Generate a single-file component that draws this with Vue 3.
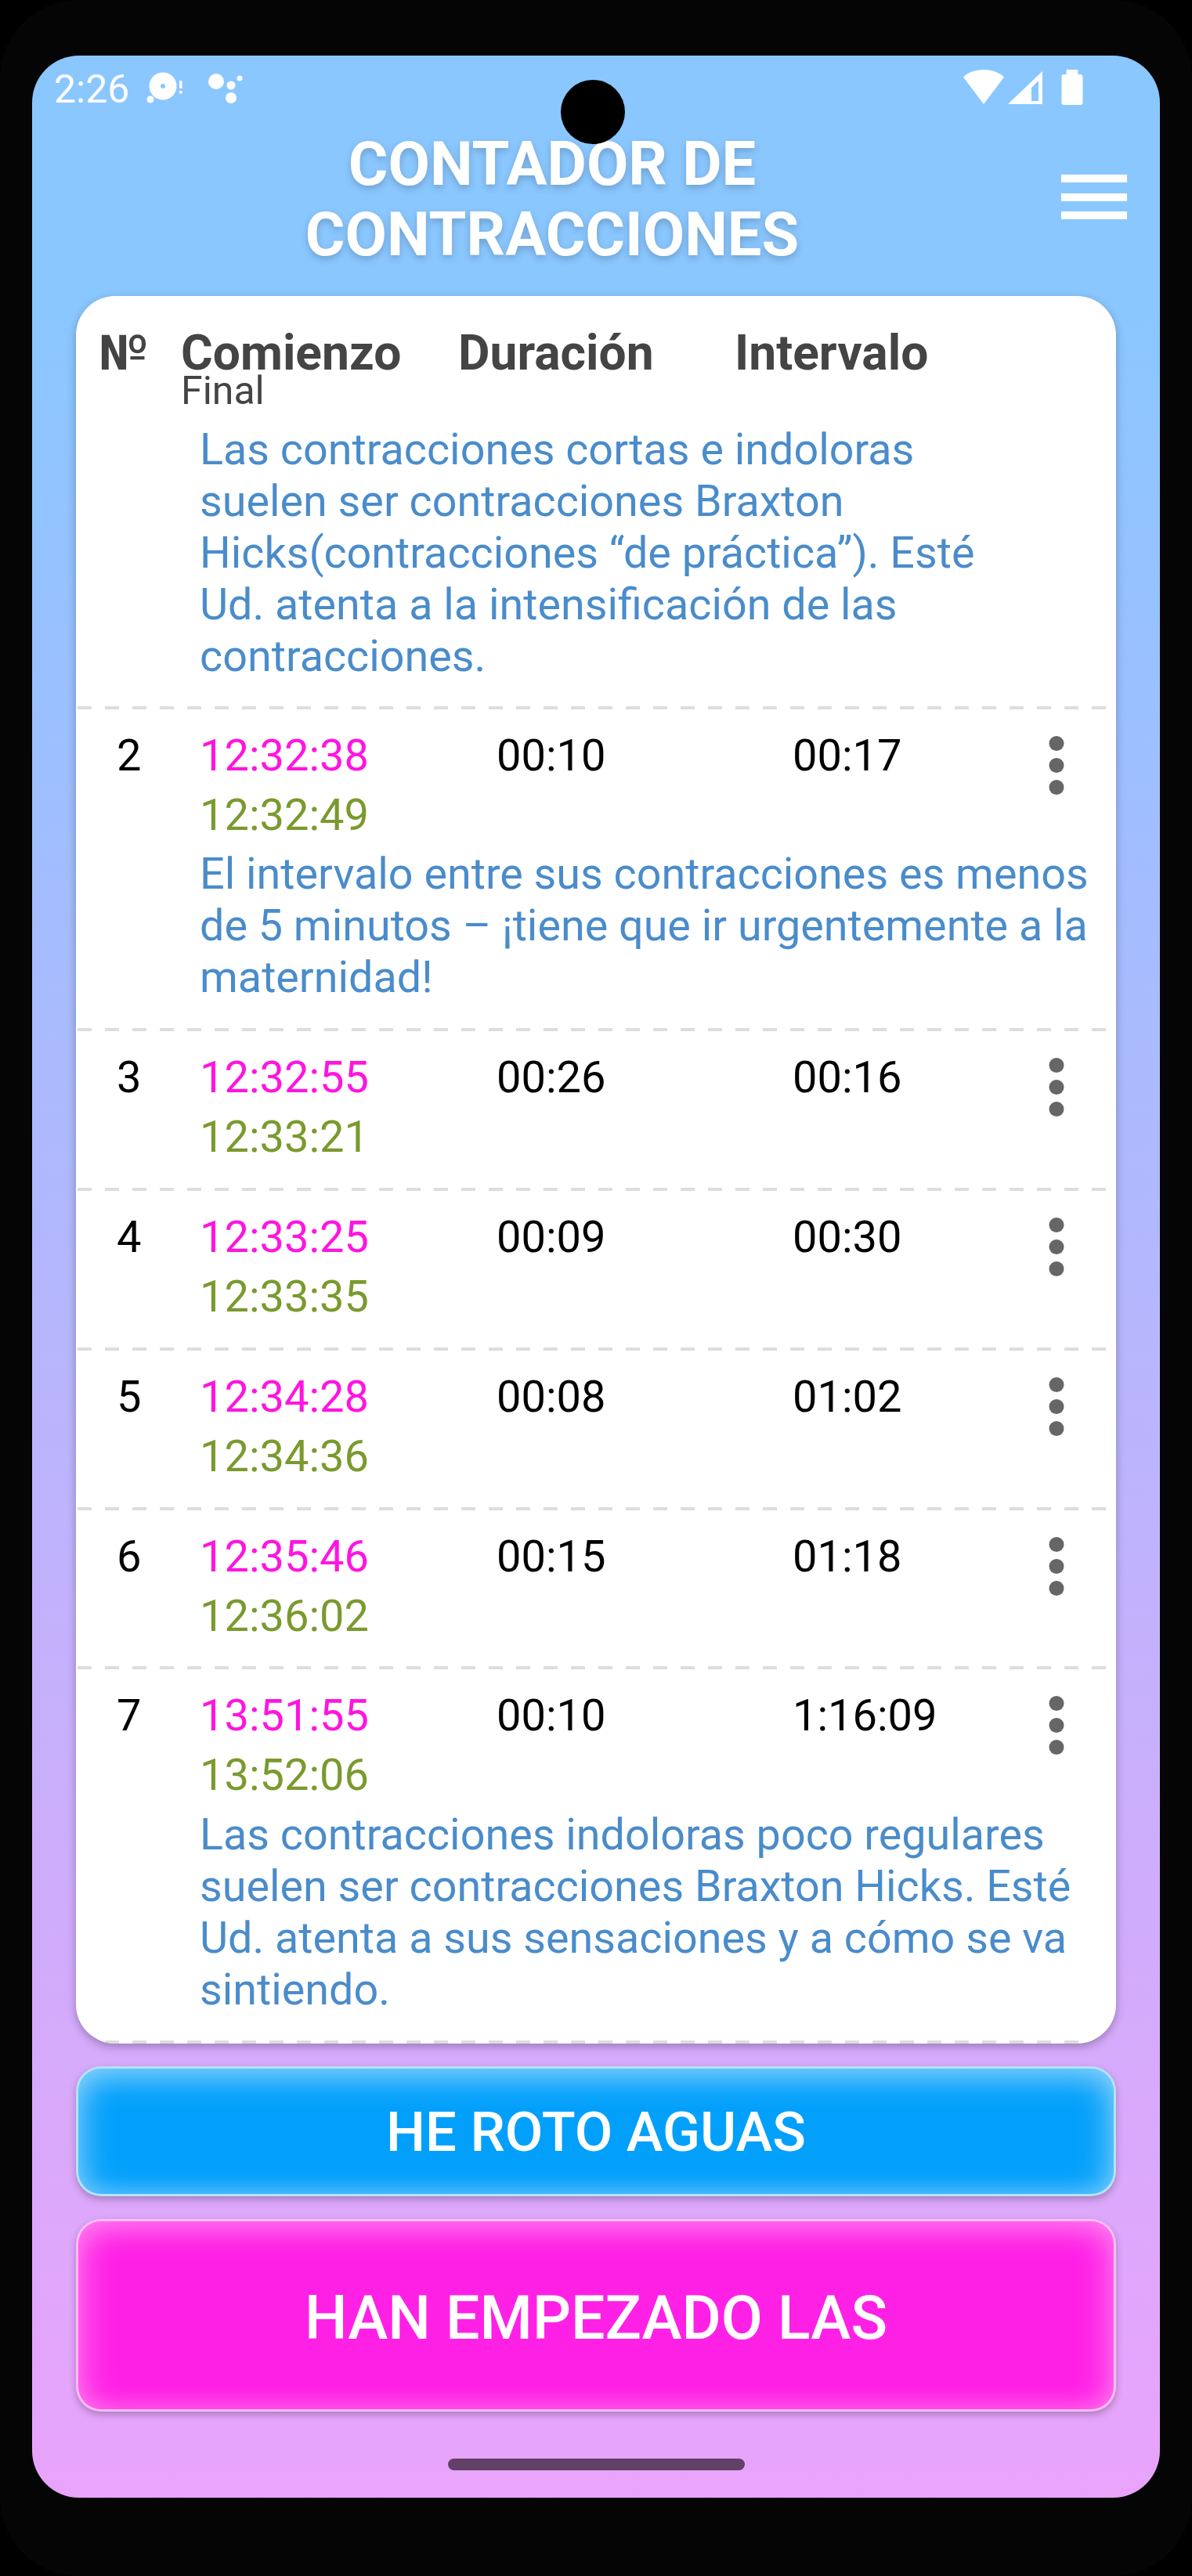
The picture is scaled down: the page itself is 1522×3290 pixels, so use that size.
<template>
  <div class="device">
    <div class="screen">
      <div class="camera"></div>

      <div class="status-bar">
        <span class="clock">2:26</span>
        <svg class="notif-disc" width="56" height="48" viewBox="0 0 56 48">
          <path fill="#fff" fill-rule="evenodd" d="M23 4.500a17.500 17.500 0 1 0 0 35a17.500 17.500 0 1 0 0-35zM23 19a3 3 0 1 1 0 6a3 3 0 1 1 0-6z" />
          <circle cx="7" cy="39" r="4.500" fill="#fff" />
          <rect x="44" y="15" width="3.500" height="10" rx="1" fill="#fff" />
          <rect x="44" y="28" width="3.500" height="3.500" fill="#fff" />
        </svg>
        <svg class="notif-dots" width="48" height="48" viewBox="0 0 48 48">
          <circle cx="12" cy="16" r="10" fill="#fff" />
          <circle cx="31" cy="21" r="5.500" fill="#fff" />
          <circle cx="42" cy="12" r="3.500" fill="#fff" />
          <circle cx="31" cy="37" r="7" fill="#fff" />
        </svg>
        <svg class="sys-icons" width="156" height="48" viewBox="0 0 156 48">
          <path fill="#fff" d="M2 10.500C8 4.500 17 1 28 1s20 3.500 26 9.500L28 45z" />
          <path fill="#fff" fill-rule="evenodd" d="M59 45L103 3V45zM89 41h9V15l-9 9z" />
          <path fill="#fff" d="M136 1h11a1.500 1.500 0 0 1 1.500 1.500V7h3a3 3 0 0 1 3 3v33a3 3 0 0 1-3 3h-21a3 3 0 0 1-3-3V10a3 3 0 0 1 3-3h3V2.500A1.500 1.500 0 0 1 136 1z" />
        </svg>
      </div>

      <header class="app-header">
        <h1 class="title">CONTADOR DE<br />CONTRACCIONES</h1>
        <div class="menu">
          <span></span>
          <span></span>
          <span></span>
        </div>
      </header>

      <section class="card">
        <div class="table-head">
          <span class="head-no">№</span>
          <div class="head-start">
            <span>Comienzo</span>
            <small>Final</small>
          </div>
          <span>Duración</span>
          <span>Intervalo</span>
        </div>
        <p class="hint first-hint">{{ firstHint }}</p>
        <div class="sep first-sep"></div>

        <template v-for="row in rows" :key="row.no">
          <div class="row">
            <span class="no">{{ row.no }}</span>
            <div class="times">
              <span class="start">{{ row.start }}</span>
              <span class="end">{{ row.end }}</span>
            </div>
            <span>{{ row.duration }}</span>
            <span>{{ row.interval }}</span>
            <svg class="more" width="38" height="76" viewBox="0 0 38 76">
              <circle cx="19" cy="9.500" r="9.500" />
              <circle cx="19" cy="37.500" r="9.500" />
              <circle cx="19" cy="65.500" r="9.500" />
            </svg>
            <p v-if="row.hint" class="hint">{{ row.hint }}</p>
          </div>
          <div class="sep"></div>
        </template>
      </section>

      <button class="btn btn-water">HE ROTO AGUAS</button>
      <button class="btn btn-start">HAN EMPEZADO LAS</button>

      <div class="home-bar"></div>
    </div>
  </div>
</template>

<script setup>
const firstHint = 'Las contracciones cortas e indoloras\nsuelen ser contracciones Braxton\nHicks(contracciones “de práctica”). Esté\nUd. atenta a la intensificación de las\ncontracciones.'

const rows = [
  {
    no: 2, start: '12:32:38', end: '12:32:49', duration: '00:10', interval: '00:17',
    hint: 'El intervalo entre sus contracciones es menos\nde 5 minutos – ¡tiene que ir urgentemente a la\nmaternidad!',
  },
  { no: 3, start: '12:32:55', end: '12:33:21', duration: '00:26', interval: '00:16' },
  { no: 4, start: '12:33:25', end: '12:33:35', duration: '00:09', interval: '00:30' },
  { no: 5, start: '12:34:28', end: '12:34:36', duration: '00:08', interval: '01:02' },
  { no: 6, start: '12:35:46', end: '12:36:02', duration: '00:15', interval: '01:18' },
  {
    no: 7, start: '13:51:55', end: '13:52:06', duration: '00:10', interval: '1:16:09',
    hint: 'Las contracciones indoloras poco regulares\nsuelen ser contracciones Braxton Hicks. Esté\nUd. atenta a sus sensaciones y a cómo se va\nsintiendo.',
  },
]
</script>

<style>
html, body { background: #000; }
</style>

<style scoped>
.device {
  width: 1522px;
  height: 3290px;
  box-sizing: border-box;
  padding: 71px 41px 100px;
  background: #050505;
  border-radius: 100px;
  font-family: Roboto, sans-serif;
}
.screen {
  position: relative;
  height: 3119px;
  overflow: hidden;
  border-radius: 60px;
  background: linear-gradient(180deg, #8ac7ff 0%, #8ac7ff 10%, #e9a3fb 100%);
}
.camera {
  position: absolute;
  left: 675px;
  top: 31px;
  width: 82px;
  height: 82px;
  border-radius: 50%;
  background: #000;
  z-index: 2;
}

.status-bar {
  display: flex;
  align-items: flex-start;
  height: 94px;
  box-sizing: border-box;
  padding: 14px 97px 0 28px;
  color: #fff;
}
.clock { font-size: 50px; line-height: 58px; }
.notif-disc { margin: 3px 0 0 20px; }
.notif-dots { margin: 3px 0 0 23px; }
.sys-icons { margin: 3px 0 0 auto; }

.app-header {
  display: flex;
  align-items: flex-start;
  gap: 16px;
  height: 213px;
  padding: 0 42px 0 30px;
  box-sizing: border-box;
}
.title {
  flex: 1;
  margin: 0;
  text-align: center;
  color: #fff;
  font-size: 77.500px;
  line-height: 90px;
  font-weight: 700;
  text-shadow: 0 4px 10px rgba(0, 0, 0, 0.2);
}
.menu {
  display: flex;
  flex-direction: column;
  gap: 13.500px;
  width: 84px;
  margin-top: 58px;
}
.menu span { height: 10px; background: #fff; }

.card {
  margin: 0 56px;
  border-radius: 50px;
  background: #fff;
  overflow: hidden;
  box-shadow: 0 4px 12px rgba(0, 0, 0, 0.28);
}
.table-head {
  display: grid;
  grid-template-columns: 105px 354px 353px 1fr;
  padding: 36px 0 0 29px;
  color: #444;
  font-size: 62.300px;
  font-weight: 700;
}
.head-start { display: flex; flex-direction: column; }
.head-start small {
  margin-top: -17px;
  font-size: 50px;
  font-weight: 400;
}

.hint {
  margin: 0;
  color: #4a8ccb;
  font-size: 55.700px;
  white-space: pre;
}
.first-hint { margin: 13px 0 0 158px; }

.sep {
  height: 4px;
  margin: 0 13px 0 2px;
  background: repeating-linear-gradient(90deg, #ddd 0 18px, transparent 18px 35px);
}
.sep.first-sep { margin-top: 31px; }
.row {
  display: grid;
  grid-template-columns: 127px 379px 378px 318px 38px;
  align-items: start;
  padding: 26px 0 31.800px 31px;
  color: #000;
  font-size: 56px;
}
.no { padding-left: 21px; }
.times { display: flex; flex-direction: column; gap: 10px; }
.start { color: #ff14e0; }
.end { color: #7a9a2e; }
.more { margin-top: 8px; fill: #666; }
.row .hint { grid-column: 2 / -1; margin-top: 9.400px; }

.btn {
  display: block;
  width: 1328px;
  margin: 0 56px;
  border: 3px solid rgba(255, 255, 255, 0.7);
  border-radius: 32px;
  color: #fff;
  font-family: Roboto, sans-serif;
  font-weight: 500;
  box-sizing: border-box;
}
.btn-water {
  height: 166px;
  margin-top: 29px;
  padding-top: 4px;
  font-size: 70.500px;
  background: #03a0fb;
  box-shadow: 0 4px 10px rgba(0, 0, 0, 0.25), inset 0 18px 34px rgba(255, 255, 255, 0.3), inset 0 -8px 24px rgba(255, 255, 255, 0.1), inset 18px 0 36px rgba(255, 255, 255, 0.18), inset -18px 0 36px rgba(255, 255, 255, 0.18);
}
.btn-start {
  height: 246px;
  margin-top: 29px;
  padding-top: 10px;
  font-size: 77px;
  background: #ff20e6;
  box-shadow: 0 4px 10px rgba(0, 0, 0, 0.25), inset 0 18px 34px rgba(255, 255, 255, 0.22), inset 0 -8px 24px rgba(255, 255, 255, 0.08), inset 18px 0 36px rgba(255, 255, 255, 0.16), inset -18px 0 36px rgba(255, 255, 255, 0.16);
}
.home-bar {
  width: 379px;
  height: 15px;
  margin: 60px auto 0;
  border-radius: 8px;
  background: #624068;
}
</style>
